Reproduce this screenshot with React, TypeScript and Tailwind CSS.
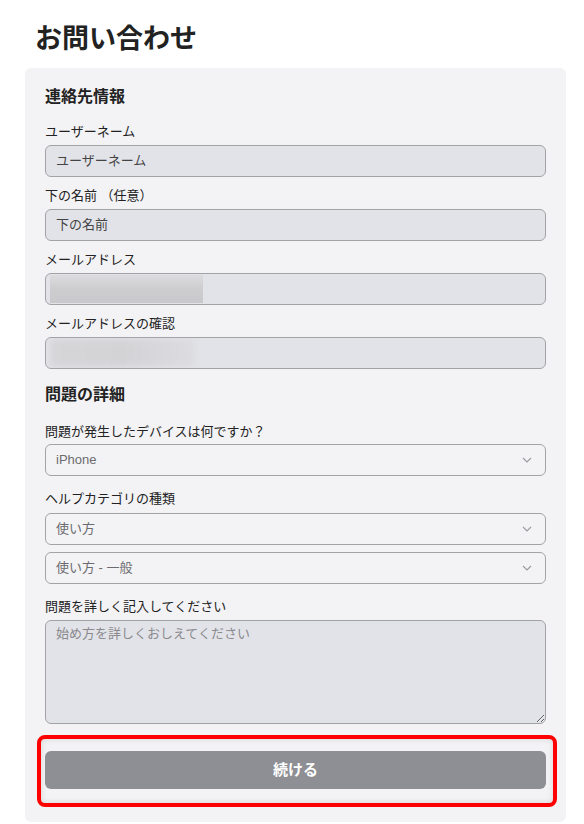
const font = "font-['Liberation_Sans','Noto_Sans_CJK_JP',sans-serif]";

function Label({ children }: { children: React.ReactNode }) {
  return <div className="h-[18px] text-[13px] leading-[18px] text-[#222]">{children}</div>;
}

function TextBox({ text }: { text: string }) {
  return (
    <div className="mt-1 flex h-8 items-center rounded-md border border-[#a3a3a6] bg-[#e2e3e8] px-[10px] text-[13px] text-[#444]">
      {text}
    </div>
  );
}

function BlurBox({ width, soft }: { width: string; soft?: boolean }) {
  return (
    <div className="mt-1 flex h-8 overflow-hidden rounded-md border border-[#a3a3a6] bg-[#e2e3e8] pl-[4px] py-[1px]">
      <div
        className={
          soft
            ? `${width} h-full bg-gradient-to-r from-[#d6d6d9] via-[#d3d3d6] to-[#dddde1] blur-[3px]`
            : `${width} h-full bg-gradient-to-b from-[#dcdcde] via-[#cdcdcf] to-[#c9c9cb]`
        }
      />
    </div>
  );
}

function Chevron() {
  return (
    <svg width="10" height="6" viewBox="0 0 10 6" fill="none" className="shrink-0">
      <path d="M1 1l4 4 4-4" stroke="#9a9a9e" strokeWidth="1.1" />
    </svg>
  );
}

function SelectBox({ text, className = "" }: { text: string; className?: string }) {
  return (
    <div
      className={`flex h-8 items-center justify-between rounded-md border border-[#a3a3a6] bg-[#f3f3f5] pl-[10px] pr-[13px] text-[13px] text-[#6b6b70] ${className}`}
    >
      <span>{text}</span>
      <Chevron />
    </div>
  );
}

export default function App() {
  return (
    <div className={`min-h-[824px] bg-white px-[25px] pt-[22px] ${font}`}>
      <h1 className="pl-[10px] text-[27px] font-bold leading-[34px] text-[#222]">お問い合わせ</h1>

      <div className="mt-[12px] w-[541px] rounded-md bg-[#f3f3f5] px-5 pt-[19px] pb-[15px]">
        <h2 className="h-5 text-[16px] font-bold leading-5 text-[#222]">連絡先情報</h2>

        <div className="mt-4">
          <Label>ユーザーネーム</Label>
          <TextBox text="ユーザーネーム" />
        </div>
        <div className="mt-[10px]">
          <Label>下の名前 （任意）</Label>
          <TextBox text="下の名前" />
        </div>
        <div className="mt-[10px]">
          <Label>メールアドレス</Label>
          <BlurBox width="w-[153px]" />
        </div>
        <div className="mt-[10px]">
          <Label>メールアドレスの確認</Label>
          <BlurBox width="w-[146px]" soft />
        </div>

        <h2 className="mt-4 h-5 text-[16px] font-bold leading-5 text-[#222]">問題の詳細</h2>

        <div className="mt-[18px]">
          <Label>問題が発生したデバイスは何ですか？</Label>
          <SelectBox text="iPhone" className="mt-[3px]" />
        </div>
        <div className="mt-[14px]">
          <Label>ヘルプカテゴリの種類</Label>
          <SelectBox text="使い方" className="mt-[5px]" />
          <SelectBox text="使い方 - 一般" className="mt-[7px]" />
        </div>
        <div className="mt-[14px]">
          <Label>問題を詳しく記入してください</Label>
          <textarea
            placeholder="始め方を詳しくおしえてください"
            className="mt-1 block h-[104px] w-full rounded-md border border-[#a3a3a6] bg-[#e2e3e8] px-[10px] py-[3px] text-[13px] leading-[20px] text-[#444] outline-none placeholder:text-[#8a8a8e]"
          />
        </div>

        <div className="mt-[11px] -ml-2 -mr-[11px] rounded-lg border-4 border-[#ff0000] pt-3 pb-[14px] pl-1 pr-[7px] shadow-[inset_0_0_6px_rgba(0,0,0,0.12)]">
          <button className="flex h-[38px] w-full items-center justify-center rounded-md bg-[#8e8f94] text-[15px] font-bold text-white">
            続ける
          </button>
        </div>
      </div>
    </div>
  );
}
